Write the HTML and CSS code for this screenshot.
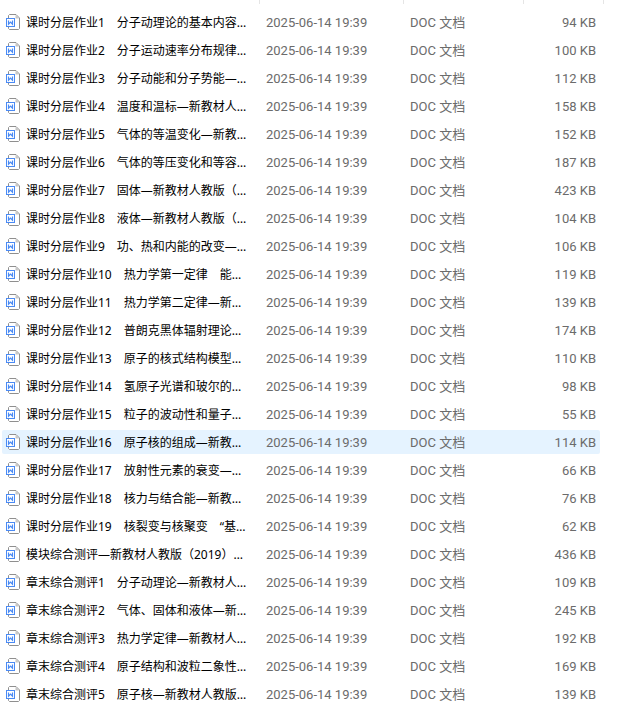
FILE: index.html
```
<!DOCTYPE html>
<html lang="zh-CN">
<head>
    <meta charset="UTF-8">
    <meta name="viewport" content="width=device-width, initial-scale=1.0">
    <title>文件列表</title>
    <link rel="stylesheet" href="styles.css">
</head>
<body>
    <!-- 文件图标 -->
    <svg class="symbols" width="0" height="0" aria-hidden="true">
        <symbol id="doc" viewBox="0 0 14 16">
            <path d="M2.5 4V1.5L3.5 .5H10L13.5 4V14.5L12.5 15.5H3.5L2.5 14.5V13" fill="#fff" stroke="#8f8f8f"/>
            <path d="M9.5 1V4.5H13Z" fill="#c4c4c4"/>
            <rect x=".5" y="4.5" width="8" height="8" fill="#fff" stroke="#4a8af4"/>
            <path d="M2.5 6.5V10.2L4.5 8.2L6.5 10.2V6.5" fill="none" stroke="#4a8af4" stroke-width="1.2"/>
        </symbol>
    </svg>

    <div class="columns">
        <span></span><span></span><span></span><span></span>
    </div>

    <div class="list">
        <table>
            <colgroup>
                <col>
                <col class="col-date">
                <col class="col-type">
                <col class="col-size">
            </colgroup>
            <tbody id="fileList"></tbody>
        </table>
    </div>

    <script>
        const files = [
            ['课时分层作业1　分子动理论的基本内容…', 94],
            ['课时分层作业2　分子运动速率分布规律…', 100],
            ['课时分层作业3　分子动能和分子势能—…', 112],
            ['课时分层作业4　温度和温标—新教材人…', 158],
            ['课时分层作业5　气体的等温变化—新教…', 152],
            ['课时分层作业6　气体的等压变化和等容…', 187],
            ['课时分层作业7　固体—新教材人教版（…', 423],
            ['课时分层作业8　液体—新教材人教版（…', 104],
            ['课时分层作业9　功、热和内能的改变—…', 106],
            ['课时分层作业10　热力学第一定律　能…', 119],
            ['课时分层作业11　热力学第二定律—新…', 139],
            ['课时分层作业12　普朗克黑体辐射理论…', 174],
            ['课时分层作业13　原子的核式结构模型…', 110],
            ['课时分层作业14　氢原子光谱和玻尔的…', 98],
            ['课时分层作业15　粒子的波动性和量子…', 55],
            ['课时分层作业16　原子核的组成—新教…', 114],
            ['课时分层作业17　放射性元素的衰变—…', 66],
            ['课时分层作业18　核力与结合能—新教…', 76],
            ['课时分层作业19　核裂变与核聚变　“基…', 62],
            ['模块综合测评—新教材人教版（2019）…', 436],
            ['章末综合测评1　分子动理论—新教材人…', 109],
            ['章末综合测评2　气体、固体和液体—新…', 245],
            ['章末综合测评3　热力学定律—新教材人…', 192],
            ['章末综合测评4　原子结构和波粒二象性…', 169],
            ['章末综合测评5　原子核—新教材人教版…', 139]
        ];
        const activeRow = 15;
        const fileList = document.getElementById('fileList');

        files.forEach(function ([name, size], i) {
            const row = document.createElement('tr');
            if (i === activeRow) row.className = 'active';
            row.innerHTML = `
                <td><div class="name"><svg class="icon" aria-hidden="true"><use href="#doc"/></svg><span>${name}</span></div></td>
                <td class="info">2025-06-14 19:39</td>
                <td class="info">DOC 文档</td>
                <td class="info size">${size} KB</td>
            `;
            fileList.appendChild(row);
        });
    </script>
</body>
</html>
```
FILE: styles.css
```
body {
    margin: 0;
    background: #fff;
    color: #6b6b6b;
    font-family: "Noto Sans", "Noto Sans CJK SC", sans-serif;
    font-size: 12px;
    line-height: 22px;
}
.symbols {
    position: absolute;
}
.columns {
    display: grid;
    grid-template-columns: 1fr 144px 120px 80px;
    height: 4px;
    margin-right: 20px;
}
.columns span {
    border-right: 1px solid #e5e5e5;
}
.list {
    padding: 2px 24px 20px 2px;
}
table {
    width: 100%;
    table-layout: fixed;
    border-collapse: separate;
    border-spacing: 0 4px;
}
.col-date {
    width: 144px;
}
.col-type {
    width: 120px;
}
.col-size {
    width: 76px;
}
td {
    padding: 0 0 0 4px;
    white-space: nowrap;
}
td:first-child {
    border-radius: 2px 0 0 2px;
}
td:last-child {
    border-radius: 0 2px 2px 0;
}
.name {
    display: flex;
    align-items: center;
    gap: 6px;
    height: 24px;
    overflow: hidden;
    color: #000;
}
.name span {
    padding-top: 2px;
}
.icon {
    width: 14px;
    height: 16px;
    flex: none;
}
.info {
    padding: 2px 0 0 6px;
    font-family: Roboto, "Noto Sans CJK SC", sans-serif;
    font-size: 13px;
}
.size {
    padding-right: 4px;
    text-align: right;
}
.active td {
    background: #e5f3ff;
}
```
